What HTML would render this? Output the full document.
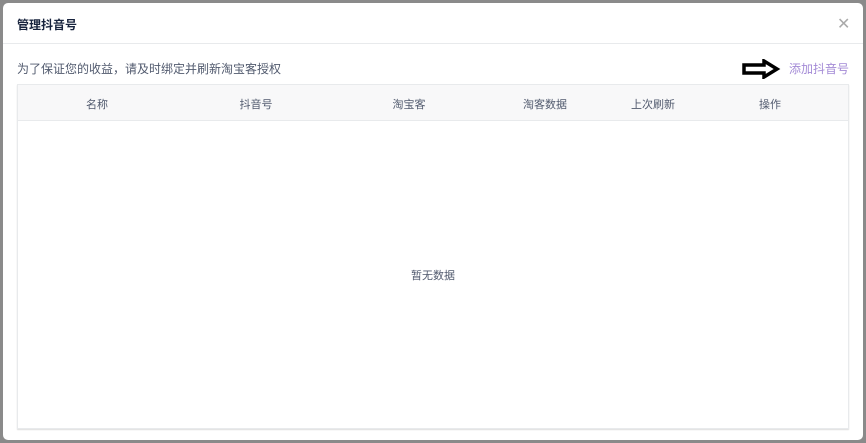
<!DOCTYPE html><html><head><meta charset="utf-8"><style>
body{margin:0;width:866px;height:443px;background:#8a8a8a;font-family:"Liberation Sans","Noto Sans CJK SC",sans-serif;position:relative;overflow:hidden}
.m{position:absolute;left:3px;top:3px;width:860px;height:437px;background:#fff;border-radius:5px}
.t{position:absolute;left:14px;top:13px;font-size:12px;font-weight:bold;color:#17233d}
.x{position:absolute;left:834px;top:11px;font-size:16px;color:#aaa;font-weight:300}
.hr{position:absolute;left:0;top:40px;width:860px;height:1px;background:#e8eaec}
.tip{position:absolute;left:14px;top:57px;font-size:12px;color:#515a6e}
.add{position:absolute;left:786px;top:57px;font-size:12px;color:#a38ad6}
.tb{position:absolute;left:14px;top:81px;width:830px;height:343px;border:1px solid #e8eaec;box-shadow:0 1px 1px #ddd}
.th{height:35px;background:#f8f8f9;border-bottom:1px solid #e8eaec;position:relative;font-size:11px;color:#515a6e}
.th span{position:absolute;top:11px;transform:translateX(-50%)}
.e{position:absolute;left:0;width:100%;top:182px;text-align:center;font-size:11px;color:#515a6e}
</style></head><body><div class="m">
<div class="t">管理抖音号</div><div class="x">✕</div><div class="hr"></div>
<div class="tip">为了保证您的收益，请及时绑定并刷新淘宝客授权</div>
<svg style="position:absolute;left:738px;top:56px" width="40" height="20"><path d="M3 6H23V2L36 10L23 18V14H3Z" fill="none" stroke="#000" stroke-width="3.5" stroke-linejoin="miter"/></svg>
<div class="add">添加抖音号</div>
<div class="tb"><div class="th"><span style="left:79px">名称</span><span style="left:238px">抖音号</span><span style="left:391px">淘宝客</span><span style="left:527px">淘客数据</span><span style="left:635px">上次刷新</span><span style="left:752px">操作</span></div>
<div class="e">暂无数据</div></div>
</div></body></html>
